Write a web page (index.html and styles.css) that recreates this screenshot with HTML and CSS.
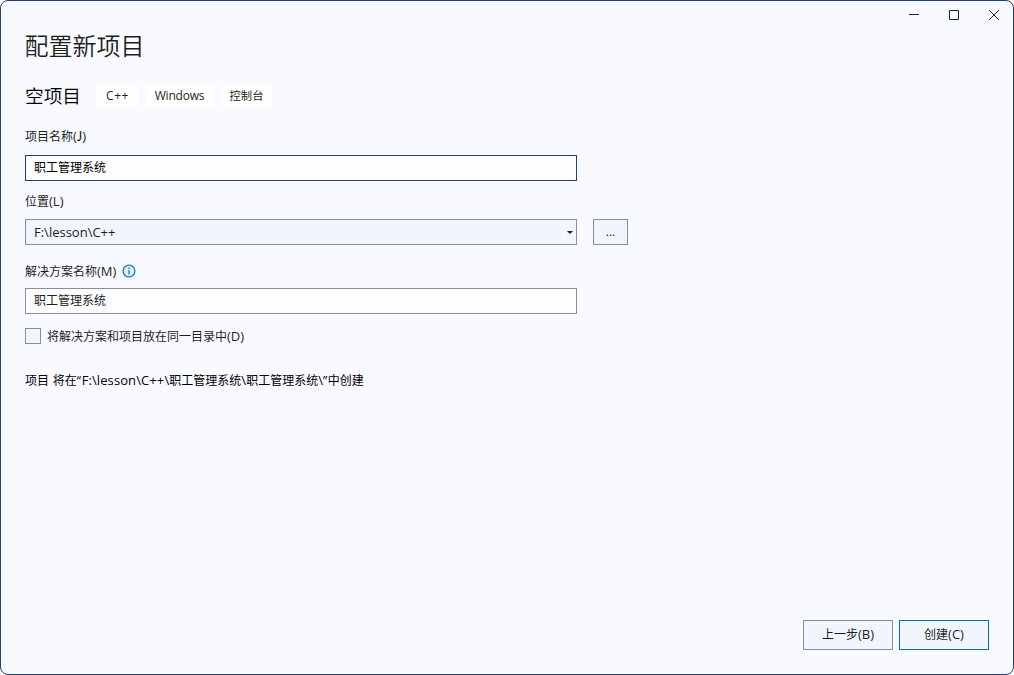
FILE: index.html
```
<!DOCTYPE html>
<html lang="zh-CN">
<head>
    <meta charset="UTF-8">
    <meta name="viewport" content="width=device-width, initial-scale=1.0">
    <title>配置新项目</title>
    <link rel="stylesheet" href="styles.css">
</head>
<body>
    <div class="window">
        <div class="titlebar">
            <svg class="win-icon" viewBox="0 0 10 10"><path d="M0 4.5h10"/></svg>
            <svg class="win-icon" viewBox="0 0 10 10"><path d="M.5.5h9v9h-9z"/></svg>
            <svg class="win-icon close" viewBox="0 0 10 10"><path d="M0 0l10 10M10 0L0 10"/></svg>
        </div>
        <div class="content">
            <h1>配置新项目</h1>
            <div class="template">
                <h2>空项目</h2>
                <span class="tag tag-lang">C++</span>
                <span class="tag tag-os">Windows</span>
                <span class="tag tag-type">控制台</span>
            </div>
            <label class="label" for="name">项目名称<span class="key">(<span class="key-j">J</span>)</span></label>
            <input class="field focused" id="name" type="text" value="职工管理系统">
            <div class="label label-location">位置<span class="key">(L)</span></div>
            <div class="location">
                <div class="field combo">
                    <span class="path">F:\lesson\C++</span>
                    <span class="arrow"><svg width="6" height="3" viewBox="0 0 6 3"><path d="M0 0h6L3 3z"/></svg></span>
                </div>
                <button class="btn browse">...</button>
            </div>
            <div class="label label-solution">
                <label for="solution">解决方案名称<span class="key">(M)</span></label>
                <svg class="info" viewBox="0 0 14 14">
                    <circle cx="7" cy="7" r="5.9"/>
                    <path d="M7 6v4.5M7 3.5v1.4"/>
                </svg>
            </div>
            <input class="field" id="solution" type="text" value="职工管理系统">
            <label class="check">
                <input type="checkbox">
                <span>将解决方案和项目放在同一目录中<span class="key">(D)</span></span>
            </label>
            <p class="result">项目 将在<span class="quote">“</span><span class="result-path">F:\lesson\C++\</span>职工管理系统<span class="result-path">\</span>职工管理系统<span class="result-path">\</span><span class="quote">”</span>中创建</p>
        </div>
        <div class="footer">
            <button class="btn">上一步<span class="key">(B)</span></button>
            <button class="btn primary">创建<span class="key">(C)</span></button>
        </div>
    </div>
</body>
</html>
```
FILE: styles.css
```
*{
    margin:0;
    padding:0;
    box-sizing: border-box;
}
body{
    width:100%;
    height:100vh;
    overflow: hidden;
    background:#fff;
    color:#1e1e1e;
    font:12px/16px "Open Sans", "Noto Sans CJK SC", sans-serif;
}
input, button{
    font:inherit;
    color:inherit;
}
.window{
    display:flex;
    flex-direction: column;
    width:100%;
    height:100vh;
    border:1px solid #213f7c;
    border-radius:8px;
    background:#f9faff;
}
.titlebar{
    display:flex;
    justify-content: flex-end;
    align-items: center;
    gap:30px;
    height:28px;
    padding-right:14px;
}
.win-icon{
    width:10px;
    height:10px;
    fill:none;
    stroke:#17233c;
    stroke-width:1;
}
.win-icon.close{
    overflow: visible;
}
.content{
    flex:1;
    padding:0 24px;
}
h1{
    height:34px;
    font-size:24px;
    font-weight:350;
    line-height:31px;
    white-space: nowrap;
    font-family:"Noto Sans CJK SC", sans-serif;
    text-indent:-.5px;
}
.template{
    display:flex;
    align-items: center;
    height:22px;
    margin-top:22px;
    color:#000;
}
h2{
    width:72px;
    height:22px;
    font-family:"Noto Sans CJK SC", sans-serif;
    font-size:18.67px;
    font-weight:350;
    line-height:20px;
}
.tag{
    height:22px;
    margin-right:8px;
    border-radius:4px;
    background:#fff;
    line-height:22px;
    text-align: center;
    color:#1e1e1e;
}
.tag-lang{
    width:41px;
    letter-spacing:.5px;
}
.tag-os{
    width:67px;
    letter-spacing:-.2px;
}
.tag-type{
    width:51px;
    font-size:11.3px;
}
.label{
    display:block;
    height:16px;
    margin-top:21px;
}
.key{
    font-size:13px;
}
.key-j{
    font-family:Lato, sans-serif;
}
.field{
    display:block;
    width:552px;
    height:26px;
    padding:0 8px 2px;
    border:1px solid #858fa3;
    background:#fdfdfd;
    outline:none;
}
.field.focused{
    margin-top:11px;
    border-color:#213f7c;
    color:#000;
}
.label-location{
    margin-top:12px;
}
.location{
    display:flex;
    gap:16px;
    margin-top:10px;
}
.combo{
    display:flex;
    padding:0 0 0 8px;
    background:#f1f5fd;
    line-height:24px;
}
.path{
    flex:1;
    font-size:13px;
}
.arrow{
    display:flex;
    align-items: center;
    justify-content: center;
    width:13px;
    padding-top:1px;
    border-left:1px solid #fafcff;
    fill:#1e1e1e;
}
.btn{
    width:90px;
    height:30px;
    padding-bottom:2px;
    border:1px solid #858fa3;
    background:#f1f5fd;
}
.browse{
    width:35px;
    height:26px;
    padding-bottom:0;
}
.label-solution{
    display:flex;
    align-items: center;
    gap:6px;
    margin-top:18px;
    margin-bottom:9px;
}
.info{
    width:14px;
    height:14px;
    fill:#dceff5;
    stroke:#1583a8;
    stroke-width:1.3;
}
.check{
    display:flex;
    align-items: flex-start;
    gap:6px;
    height:16px;
    margin-top:14px;
}
.check input{
    appearance: none;
    width:16px;
    height:16px;
    border:1px solid #858fa3;
    background:#f1f5fd;
}
.result{
    margin-top:28px;
    color:#000;
    white-space: nowrap;
    word-spacing:.7px;
}
.result-path{
    font-size:13px;
    letter-spacing:.1px;
}
.quote{
    letter-spacing:.6px;
}
.footer{
    display:flex;
    justify-content: flex-end;
    gap:6px;
    padding:0 24px 24px;
}
.btn.primary{
    border-color:#0a70b8;
}
```
